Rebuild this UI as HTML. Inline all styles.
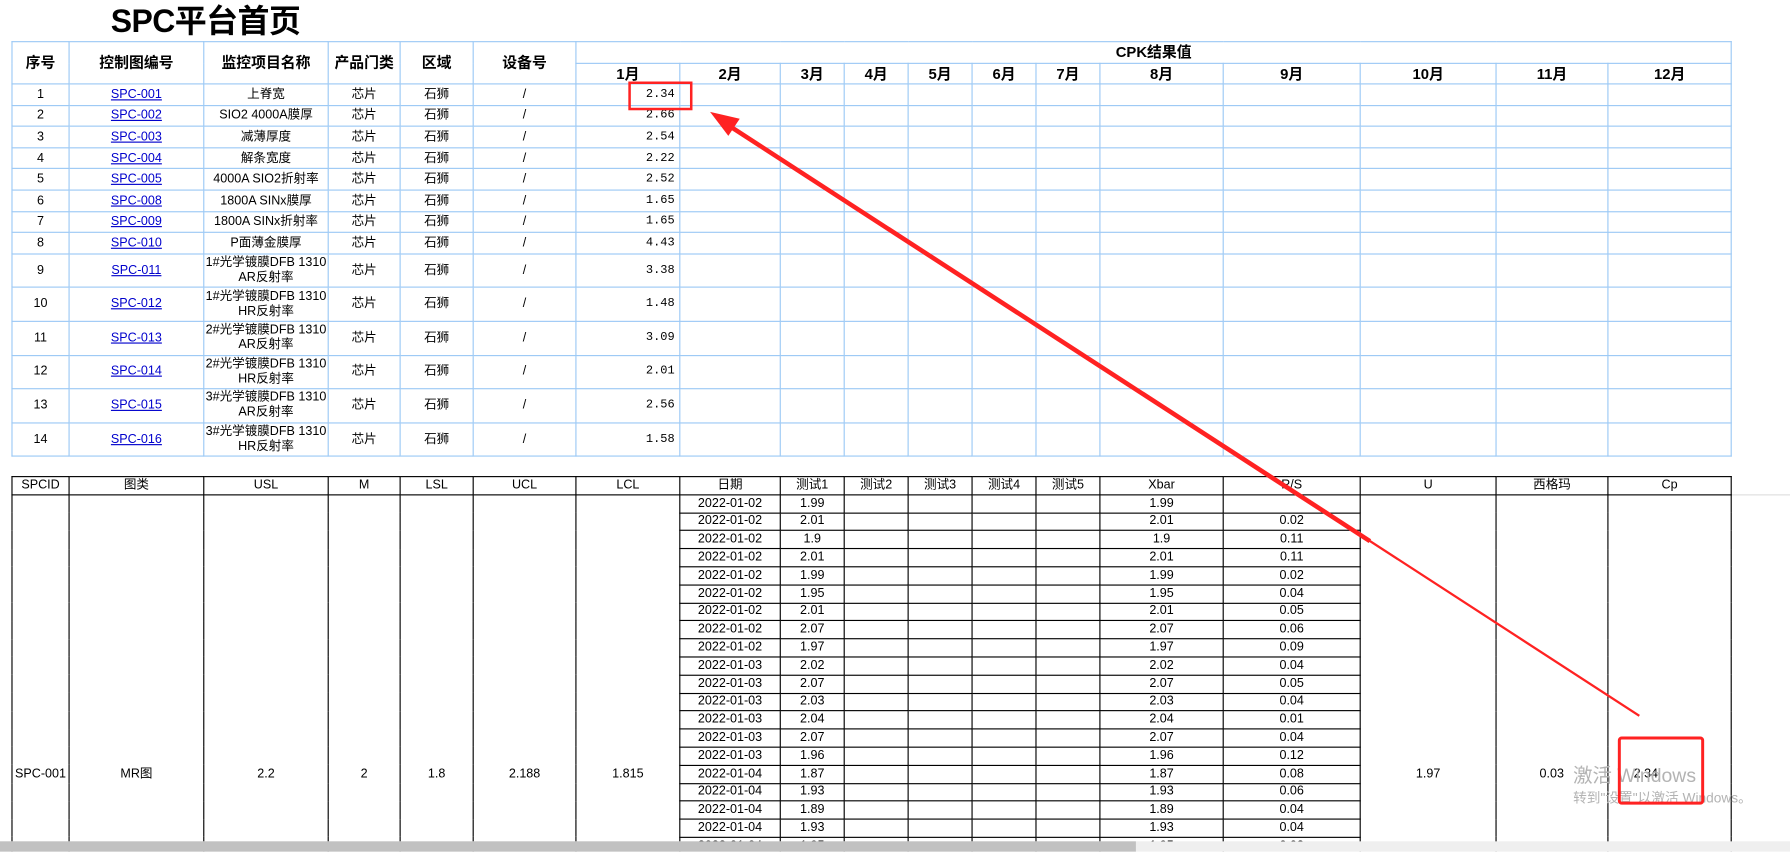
<!DOCTYPE html>
<html><head><meta charset="utf-8"><style>
*{margin:0;padding:0;box-sizing:border-box}
html,body{width:1790px;height:852px;overflow:hidden;background:#fff}
#w{position:absolute;left:0;top:0;width:1568px;height:746.3px;transform:scale(1.14158);transform-origin:0 0;overflow:hidden;font-family:"Liberation Sans","Noto Sans CJK SC",sans-serif;color:#000}
h1{position:absolute;left:97px;top:3px;font-size:28px;font-weight:bold;letter-spacing:-0.5px;line-height:32px}
table{border-collapse:collapse;table-layout:fixed;position:absolute;left:10px}
#t1{top:36px;width:1506px}
#t1 td,#t1 th{border:1px solid #9cc9f5;font-size:11px;text-align:center;font-weight:normal;padding:0;overflow:hidden;white-space:nowrap}
#t1 th{font-weight:bold;font-size:13px;line-height:14px}
#t1 tr.h1 th{height:19px}
#t1 tr.h2 th{height:18px}
#t1 a{color:#00c;text-decoration:underline}
#t1 td.v{text-align:right;font-family:"Liberation Mono",monospace;font-size:10.5px;padding-right:4px}
#t1 tr.s td{height:18.6px;line-height:12px}
#t1 tr.d td{height:29.6px;line-height:13px}
#t2{top:417px;width:1506px}
#t2 td{border:1px solid #000;font-size:11px;text-align:center;padding:0;height:15.8px;line-height:13px;white-space:nowrap}
#t2 td.m{vertical-align:top;padding-top:238px}
#sb{position:absolute;left:0;top:737px;width:1568px;height:10px;background:#efefef}
#sb div{width:995px;height:10px;background:#c1c1c1}
.wm{position:absolute;color:#b3b3b3;font-family:"Liberation Sans","Noto Sans CJK SC",sans-serif;white-space:nowrap}
</style></head><body><div id="w">
<h1>SPC平台首页</h1>
<table id="t1">
<colgroup><col style="width:50px"><col style="width:118px"><col style="width:109px"><col style="width:63px"><col style="width:64px"><col style="width:90px"><col style="width:91px"><col style="width:88px"><col style="width:56px"><col style="width:56px"><col style="width:56px"><col style="width:56px"><col style="width:56px"><col style="width:108px"><col style="width:120px"><col style="width:119px"><col style="width:98px"><col style="width:108px"></colgroup>
<tr class="h1"><th rowspan="2">序号</th><th rowspan="2">控制图编号</th><th rowspan="2">监控项目名称</th><th rowspan="2">产品门类</th><th rowspan="2">区域</th><th rowspan="2">设备号</th><th colspan="12">CPK结果值</th></tr>
<tr class="h2"><th>1月</th><th>2月</th><th>3月</th><th>4月</th><th>5月</th><th>6月</th><th>7月</th><th>8月</th><th>9月</th><th>10月</th><th>11月</th><th>12月</th></tr>
<tr class="s"><td>1</td><td><a>SPC-001</a></td><td>上脊宽</td><td>芯片</td><td>石狮</td><td>/</td><td class="v">2.34</td><td></td><td></td><td></td><td></td><td></td><td></td><td></td><td></td><td></td><td></td><td></td></tr>
<tr class="s"><td>2</td><td><a>SPC-002</a></td><td>SIO2 4000A膜厚</td><td>芯片</td><td>石狮</td><td>/</td><td class="v">2.66</td><td></td><td></td><td></td><td></td><td></td><td></td><td></td><td></td><td></td><td></td><td></td></tr>
<tr class="s"><td>3</td><td><a>SPC-003</a></td><td>减薄厚度</td><td>芯片</td><td>石狮</td><td>/</td><td class="v">2.54</td><td></td><td></td><td></td><td></td><td></td><td></td><td></td><td></td><td></td><td></td><td></td></tr>
<tr class="s"><td>4</td><td><a>SPC-004</a></td><td>解条宽度</td><td>芯片</td><td>石狮</td><td>/</td><td class="v">2.22</td><td></td><td></td><td></td><td></td><td></td><td></td><td></td><td></td><td></td><td></td><td></td></tr>
<tr class="s"><td>5</td><td><a>SPC-005</a></td><td>4000A SIO2折射率</td><td>芯片</td><td>石狮</td><td>/</td><td class="v">2.52</td><td></td><td></td><td></td><td></td><td></td><td></td><td></td><td></td><td></td><td></td><td></td></tr>
<tr class="s"><td>6</td><td><a>SPC-008</a></td><td>1800A SINx膜厚</td><td>芯片</td><td>石狮</td><td>/</td><td class="v">1.65</td><td></td><td></td><td></td><td></td><td></td><td></td><td></td><td></td><td></td><td></td><td></td></tr>
<tr class="s"><td>7</td><td><a>SPC-009</a></td><td>1800A SINx折射率</td><td>芯片</td><td>石狮</td><td>/</td><td class="v">1.65</td><td></td><td></td><td></td><td></td><td></td><td></td><td></td><td></td><td></td><td></td><td></td></tr>
<tr class="s"><td>8</td><td><a>SPC-010</a></td><td>P面薄金膜厚</td><td>芯片</td><td>石狮</td><td>/</td><td class="v">4.43</td><td></td><td></td><td></td><td></td><td></td><td></td><td></td><td></td><td></td><td></td><td></td></tr>
<tr class="d"><td>9</td><td><a>SPC-011</a></td><td>1#光学镀膜DFB 1310<br>AR反射率</td><td>芯片</td><td>石狮</td><td>/</td><td class="v">3.38</td><td></td><td></td><td></td><td></td><td></td><td></td><td></td><td></td><td></td><td></td><td></td></tr>
<tr class="d"><td>10</td><td><a>SPC-012</a></td><td>1#光学镀膜DFB 1310<br>HR反射率</td><td>芯片</td><td>石狮</td><td>/</td><td class="v">1.48</td><td></td><td></td><td></td><td></td><td></td><td></td><td></td><td></td><td></td><td></td><td></td></tr>
<tr class="d"><td>11</td><td><a>SPC-013</a></td><td>2#光学镀膜DFB 1310<br>AR反射率</td><td>芯片</td><td>石狮</td><td>/</td><td class="v">3.09</td><td></td><td></td><td></td><td></td><td></td><td></td><td></td><td></td><td></td><td></td><td></td></tr>
<tr class="d"><td>12</td><td><a>SPC-014</a></td><td>2#光学镀膜DFB 1310<br>HR反射率</td><td>芯片</td><td>石狮</td><td>/</td><td class="v">2.01</td><td></td><td></td><td></td><td></td><td></td><td></td><td></td><td></td><td></td><td></td><td></td></tr>
<tr class="d"><td>13</td><td><a>SPC-015</a></td><td>3#光学镀膜DFB 1310<br>AR反射率</td><td>芯片</td><td>石狮</td><td>/</td><td class="v">2.56</td><td></td><td></td><td></td><td></td><td></td><td></td><td></td><td></td><td></td><td></td><td></td></tr>
<tr class="d"><td>14</td><td><a>SPC-016</a></td><td>3#光学镀膜DFB 1310<br>HR反射率</td><td>芯片</td><td>石狮</td><td>/</td><td class="v">1.58</td><td></td><td></td><td></td><td></td><td></td><td></td><td></td><td></td><td></td><td></td><td></td></tr>
</table>
<div style="position:absolute;left:1516px;top:433px;width:52px;border-top:1px solid #ddd"></div>
<table id="t2">
<colgroup><col style="width:50px"><col style="width:118px"><col style="width:109px"><col style="width:63px"><col style="width:64px"><col style="width:90px"><col style="width:91px"><col style="width:88px"><col style="width:56px"><col style="width:56px"><col style="width:56px"><col style="width:56px"><col style="width:56px"><col style="width:108px"><col style="width:120px"><col style="width:119px"><col style="width:98px"><col style="width:108px"></colgroup>
<tr><td>SPCID</td><td>图类</td><td>USL</td><td>M</td><td>LSL</td><td>UCL</td><td>LCL</td><td>日期</td><td>测试1</td><td>测试2</td><td>测试3</td><td>测试4</td><td>测试5</td><td>Xbar</td><td>R/S</td><td>U</td><td>西格玛</td><td>Cp</td></tr>
<tr><td class="m" rowspan="21">SPC-001</td><td class="m" rowspan="21">MR图</td><td class="m" rowspan="21">2.2</td><td class="m" rowspan="21">2</td><td class="m" rowspan="21">1.8</td><td class="m" rowspan="21">2.188</td><td class="m" rowspan="21">1.815</td><td>2022-01-02</td><td>1.99</td><td></td><td></td><td></td><td></td><td>1.99</td><td></td><td class="m" rowspan="21">1.97</td><td class="m" rowspan="21" style="text-align:right;padding-right:38px">0.03</td><td class="m" rowspan="21" style="text-align:left;padding-left:22px">2.34</td></tr>
<tr><td>2022-01-02</td><td>2.01</td><td></td><td></td><td></td><td></td><td>2.01</td><td>0.02</td></tr>
<tr><td>2022-01-02</td><td>1.9</td><td></td><td></td><td></td><td></td><td>1.9</td><td>0.11</td></tr>
<tr><td>2022-01-02</td><td>2.01</td><td></td><td></td><td></td><td></td><td>2.01</td><td>0.11</td></tr>
<tr><td>2022-01-02</td><td>1.99</td><td></td><td></td><td></td><td></td><td>1.99</td><td>0.02</td></tr>
<tr><td>2022-01-02</td><td>1.95</td><td></td><td></td><td></td><td></td><td>1.95</td><td>0.04</td></tr>
<tr><td>2022-01-02</td><td>2.01</td><td></td><td></td><td></td><td></td><td>2.01</td><td>0.05</td></tr>
<tr><td>2022-01-02</td><td>2.07</td><td></td><td></td><td></td><td></td><td>2.07</td><td>0.06</td></tr>
<tr><td>2022-01-02</td><td>1.97</td><td></td><td></td><td></td><td></td><td>1.97</td><td>0.09</td></tr>
<tr><td>2022-01-03</td><td>2.02</td><td></td><td></td><td></td><td></td><td>2.02</td><td>0.04</td></tr>
<tr><td>2022-01-03</td><td>2.07</td><td></td><td></td><td></td><td></td><td>2.07</td><td>0.05</td></tr>
<tr><td>2022-01-03</td><td>2.03</td><td></td><td></td><td></td><td></td><td>2.03</td><td>0.04</td></tr>
<tr><td>2022-01-03</td><td>2.04</td><td></td><td></td><td></td><td></td><td>2.04</td><td>0.01</td></tr>
<tr><td>2022-01-03</td><td>2.07</td><td></td><td></td><td></td><td></td><td>2.07</td><td>0.04</td></tr>
<tr><td>2022-01-03</td><td>1.96</td><td></td><td></td><td></td><td></td><td>1.96</td><td>0.12</td></tr>
<tr><td>2022-01-04</td><td>1.87</td><td></td><td></td><td></td><td></td><td>1.87</td><td>0.08</td></tr>
<tr><td>2022-01-04</td><td>1.93</td><td></td><td></td><td></td><td></td><td>1.93</td><td>0.06</td></tr>
<tr><td>2022-01-04</td><td>1.89</td><td></td><td></td><td></td><td></td><td>1.89</td><td>0.04</td></tr>
<tr><td>2022-01-04</td><td>1.93</td><td></td><td></td><td></td><td></td><td>1.93</td><td>0.04</td></tr>
<tr><td>2022-01-04</td><td>1.95</td><td></td><td></td><td></td><td></td><td>1.95</td><td>0.02</td></tr>
</table>
<div class="wm" style="left:1378px;top:665px;font-size:17px">激活 Windows</div>
<div class="wm" style="left:1378px;top:690px;font-size:12px">转到"设置"以激活 Windows。</div>
<svg style="position:absolute;left:0;top:0" width="1568" height="746">
<rect x="551.5" y="72.5" width="54" height="23" fill="none" stroke="#f22" stroke-width="2.2"/>
<rect x="1418.5" y="646.5" width="73" height="57" rx="2" fill="none" stroke="#f22" stroke-width="2.6"/>
<line x1="1436" y1="627" x2="636" y2="108" stroke="#f22" stroke-width="2"/>
<line x1="1200" y1="474" x2="640" y2="111" stroke="#f22" stroke-width="4"/>
<polygon points="622,98 648,104 638,119" fill="#f22"/>
</svg>
<div id="sb"><div></div></div>
</div></body></html>
